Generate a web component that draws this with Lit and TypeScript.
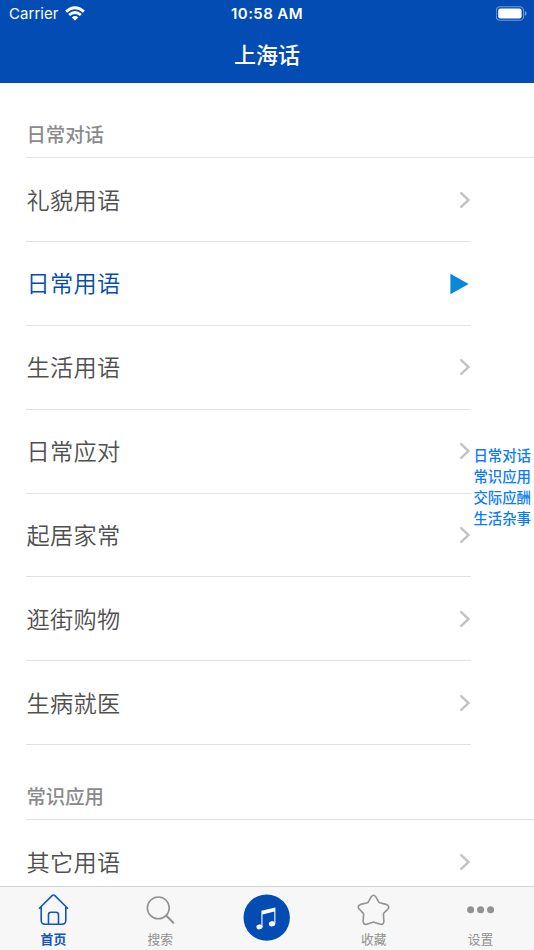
import { LitElement, html, css, svg } from "lit";
import { customElement, property } from "lit/decorators.js";
import { classMap } from "lit/directives/class-map.js";

const SECTIONS = [
  {
    title: "日常对话",
    items: ["礼貌用语", "日常用语", "生活用语", "日常应对", "起居家常", "逛街购物", "生病就医"],
  },
  { title: "常识应用", items: ["其它用语"] },
];

const INDEX = ["日常对话", "常识应用", "交际应酬", "生活杂事"];

const TAB_ICONS: Record<string, unknown> = {
  home: svg`<path d="M2.4 15.2 L15.1 2.6 Q16.5 1.4 17.9 2.6 L30.6 15.2 M4.2 13.8 V27.2 Q4.2 31.2 8.2 31.2 H24.8 Q28.8 31.2 28.8 27.2 V13.8 M11.5 31 V21.8 Q11.5 19.3 14 19.3 H19 Q21.5 19.3 21.5 21.8 V31"/>`,
  search: svg`<circle cx="14.3" cy="14.9" r="10.9"/><path class="handle" d="M22.4 22.8 L29.3 29.7"/>`,
  star: svg`<path d="M14.3 3.7 Q16.5 0.7 18.7 3.7 L21.8 9.2 Q22 9.6 22.5 9.8 L29.3 11.4 Q33.2 12.9 30.9 16 L26.6 20.4 Q26.3 20.8 26.4 21.3 L26.9 28.2 Q26.6 32 23.3 31.2 L17.2 29.2 Q16.5 29 15.8 29.2 L9.7 31.2 Q6.4 32 6.1 28.2 L6.6 21.3 Q6.7 20.8 6.4 20.4 L2.1 16 Q-0.2 12.9 3.7 11.4 L10.5 9.8 Q11 9.6 11.2 9.2 Z"/>`,
  more: svg`<g class="solid"><circle cx="6.6" cy="16.7" r="3.5"/><circle cx="16.6" cy="16.7" r="3.5"/><circle cx="26.6" cy="16.7" r="3.5"/></g>`,
};

@customElement("status-bar")
class StatusBar extends LitElement {
  static styles = css`
    :host {
      display: grid;
      grid-template-columns: 1fr auto 1fr;
      align-items: center;
      height: 27px;
      padding: 0 7px 0 9px;
      font: 400 15px/28px Inter, sans-serif;
    }
    .carrier { display: flex; align-items: center; gap: 6px; letter-spacing: 0.05px; }
    .wifi { width: 20px; height: 15px; margin-top: -2px; }
    .time { font-weight: 600; letter-spacing: 0.4px; margin-left: -2px; }
    .battery { justify-self: end; width: 31px; height: 15px; margin-top: -1px; }
  `;
  render() {
    return html`
      <div class="carrier">
        <span>Carrier</span>
        <svg class="wifi" viewBox="0 0 20 15" fill="none" stroke="#fff" stroke-width="2.8">
          <path d="M1.1 5.6 Q10 -2.2 18.9 5.6" />
          <path d="M4.1 9 Q10 4 15.9 9" />
          <path d="M10 14.6 L6.8 11.4 Q10 8.8 13.2 11.4 Z" fill="#fff" stroke="none" />
        </svg>
      </div>
      <span class="time">10:58 AM</span>
      <svg class="battery" viewBox="0 0 31 15">
        <rect x="0.2" y="0.7" width="27.4" height="13.6" rx="3.9" fill="none" stroke="#fff" stroke-opacity=".45" stroke-width="1.1" />
        <rect x="2.2" y="2.6" width="23.4" height="9.8" rx="2.2" fill="#fff" />
        <path d="M29 5.2 Q30.6 5.8 30.6 7.5 T29 9.8 Z" fill="#fff" fill-opacity=".5" />
      </svg>
    `;
  }
}

@customElement("phrase-row")
class PhraseRow extends LitElement {
  @property() label = "";
  @property({ type: Boolean }) playing = false;

  static styles = css`
    :host { display: block; height: 83.84px; margin-left: 26px; width: 445px; }
    .row {
      display: flex;
      align-items: center;
      justify-content: space-between;
      box-sizing: border-box;
      height: 100%;
      border-bottom: 1px solid #e2e2e3;
      color: #505050;
      font-size: 23.2px;
      font-weight: 350;
      letter-spacing: 0.35px;
    }
    .label { padding: 0 0 2px 0.4px; }
    .playing { color: #024cb3; }
    .chevron { width: 12px; height: 18px; margin: 0 0.5px 0 0; }
    .play { width: 20px; height: 22px; margin: 1px 1px 0 0; }
  `;
  render() {
    return html`
      <div class=${classMap({ row: true, playing: this.playing })}>
        <span class="label">${this.label}</span>
        ${this.playing
          ? html`<svg class="play" viewBox="0 0 20 22"><path d="M0.4 0.8 L18.6 11 L0.4 21.2 Z" fill="#0788db" /></svg>`
          : html`<svg class="chevron" viewBox="0 0 12 18"><path d="M2.2 2.2 L9.5 9 L2.2 15.8" fill="none" stroke="#c4c4c7" stroke-width="2.5" stroke-linecap="round" stroke-linejoin="miter" /></svg>`}
      </div>
    `;
  }
}

@customElement("tab-item")
class TabItem extends LitElement {
  @property() icon = "";
  @property() label = "";
  @property({ type: Boolean }) active = false;

  static styles = css`
    :host { display: block; }
    .tab {
      display: flex;
      flex-direction: column;
      align-items: center;
      padding-top: 6px;
      color: #929292;
      font-size: 12.8px;
      line-height: 20px;
      font-weight: 400;
    }
    .active { color: #1456b8; font-weight: 700; }
    .icon { width: 33px; height: 33px; fill: none; stroke: currentColor; stroke-width: 1.6; stroke-linecap: round; stroke-linejoin: round; margin-bottom: 3px; }
    .handle { stroke-width: 2; }
    .solid { fill: currentColor; stroke: none; }
  `;
  render() {
    return html`
      <div class=${classMap({ tab: true, active: this.active })}>
        <svg class="icon" viewBox="0 0 33 33">${TAB_ICONS[this.icon]}</svg>
        <span>${this.label}</span>
      </div>
    `;
  }
}

@customElement("app-root")
class AppRoot extends LitElement {
  static styles = css`
    :host {
      display: flex;
      flex-direction: column;
      position: relative;
      height: 950px;
      overflow: hidden;
      background: #fff;
      font-family: "Noto Sans CJK SC", sans-serif;
    }
    .header { flex: none; height: 83px; background: #024cb3; color: #fff; }
    .title {
      margin: 0;
      text-align: center;
      font-size: 22px;
      font-weight: 500;
      line-height: 52px;
    }
    .list { flex: 1; min-height: 0; overflow: hidden; }
    .section-title {
      box-sizing: border-box;
      height: 75.2px;
      margin: 0 0 0 26px;
      padding: 36px 0 0 0.4px;
      border-bottom: 1px solid #e2e2e3;
      color: #8a8a8d;
      font-size: 19.4px;
      font-weight: 500;
      line-height: 30px;
    }
    .index {
      position: absolute;
      right: 3px;
      top: 443.5px;
      display: grid;
      grid-auto-rows: 21.1px;
      color: #0a7cfb;
      font-size: 14.4px;
      line-height: 21px;
      font-weight: 500;
    }
    .tabs {
      flex: none;
      box-sizing: border-box;
      display: grid;
      grid-template-columns: repeat(5, 1fr);
      height: 64px;
      background: #f7f7f7;
      border-top: 1px solid #d2d2d2;
    }
    .music { justify-self: center; width: 47px; height: 47px; margin-top: 7px; }
  `;
  render() {
    return html`
      <header class="header">
        <status-bar></status-bar>
        <h1 class="title">上海话</h1>
      </header>
      <main class="list">
        ${SECTIONS.map(
          (s) => html`
            <h2 class="section-title">${s.title}</h2>
            ${s.items.map((i) => html`<phrase-row .label=${i} .playing=${i === "日常用语"}></phrase-row>`)}
          `
        )}
      </main>
      <nav class="index">${INDEX.map((i) => html`<span>${i}</span>`)}</nav>
      <footer class="tabs">
        <tab-item icon="home" label="首页" active></tab-item>
        <tab-item icon="search" label="搜索"></tab-item>
        <svg class="music" viewBox="0 0 47 47">
          <circle cx="23.7" cy="23.6" r="23.2" fill="#024cb3" />
          <g fill="#fff">
            <path d="M18.4 16.8 L32.4 13.6 V29.5 H31.3 V17.6 L19.5 20.4 V33 H18.4 Z" />
            <ellipse cx="16.5" cy="32.9" rx="3.1" ry="2.4" transform="rotate(-12 16.5 32.9)" />
            <ellipse cx="29.1" cy="29.8" rx="3.2" ry="2.5" transform="rotate(-12 29.1 29.8)" />
          </g>
        </svg>
        <tab-item icon="star" label="收藏"></tab-item>
        <tab-item icon="more" label="设置"></tab-item>
      </footer>
    `;
  }
}
